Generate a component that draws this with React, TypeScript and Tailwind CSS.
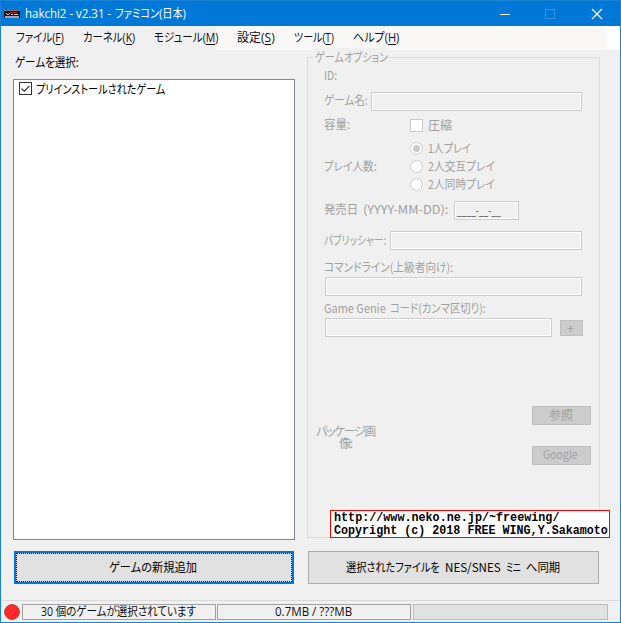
import React, { useLayoutEffect, useRef } from 'react';
import clsx from 'clsx';

type TextProps = {
  className?: string;
  children: React.ReactNode;
};

// Squeezes a single line of text horizontally so it fills the width of its box
const FitText: React.FC<TextProps> = ({ className, children }) => {
  const ref = useRef<HTMLSpanElement>(null);

  useLayoutEffect(() => {
    const fit = () => {
      const el = ref.current;
      if (!el || !el.parentElement) return;
      el.style.transform = `scaleX(${el.parentElement.clientWidth / el.offsetWidth})`;
    };
    fit();
    document.fonts.ready.then(fit);
  }, []);

  return (
    <span className={clsx('block shrink-0 whitespace-nowrap', className)}>
      <span ref={ref} className="inline-block origin-left">
        {children}
      </span>
    </span>
  );
};

const Field: React.FC<{ className: string; children?: React.ReactNode }> = ({ className, children }) => (
  <div className={clsx('h-[19px] shrink-0 border border-[#cccccc] bg-[#f0f0f0] shadow-[inset_0_0_0_1px_#fff]', className)}>
    {children}
  </div>
);

const Radio: React.FC<{ label: string; width: string; checked?: boolean }> = ({ label, width, checked }) => (
  <div className="flex h-[18px] items-center gap-[5px]">
    <span className="flex h-[13px] w-[13px] items-center justify-center rounded-full border border-[#cccccc] bg-white">
      {checked && <span className="h-[7px] w-[7px] rounded-full bg-[#cccccc]" />}
    </span>
    <FitText className={width}>{label}</FitText>
  </div>
);

const menus = [
  { label: 'ファイル', hotkey: 'F', width: 'w-[48px]' },
  { label: 'カーネル', hotkey: 'K', width: 'w-[52px]' },
  { label: 'モジュール', hotkey: 'M', width: 'w-[64px]' },
  { label: '設定', hotkey: 'S', width: 'w-[38px]' },
  { label: 'ツール', hotkey: 'T', width: 'w-[40px]' },
  { label: 'ヘルプ', hotkey: 'H', width: 'w-[46px]' },
];

const TitleBar = () => (
  <div className="flex h-[25px] shrink-0 items-center bg-[#0078d7] pl-[3px] font-['Open_Sans','Noto_Sans_CJK_JP',sans-serif] text-[12px] leading-[18px] text-white">
    <svg width="16" height="8" viewBox="0 0 16 8" shapeRendering="crispEdges">
      <rect width="16" height="8" fill="#15151c" />
      <rect width="16" height="1" fill="#77737c" />
      <rect x="1" y="6" width="14" height="2" fill="#a7a5a9" />
      <path d="M2 3.5h1M3 4.5h2M5 3.5h1M7 4.5h2M10 4.5h4" stroke="#ccc" />
      <path d="M6 2.5h7" stroke="#b32e3a" />
    </svg>
    <div className="ml-[5px] flex gap-[4px]">
      <FitText className="w-[86px]">hakchi2 - v2.31 -</FitText>
      <FitText className="w-[71px]">ファミコン(日本)</FitText>
    </div>
    <svg className="mr-[17px] ml-auto" width="103" height="12" viewBox="0 0 103 12" fill="none">
      <path d="M0 6.5h10" stroke="#fff" />
      <rect x="45.5" y="1.5" width="9" height="9" stroke="#3393df" />
      <path d="M92 1l10 10M102 1l-10 10" stroke="#fff" strokeWidth="1.2" />
    </svg>
  </div>
);

const MenuBar = () => (
  <div className="flex h-[24px] shrink-0 items-center gap-[19px] bg-linear-to-r from-[#f0f0f0] from-[215px] via-[#f9f8f7] via-[215px] to-[#f9f8f7] pl-[15px] font-['Open_Sans','Noto_Sans_CJK_JP',sans-serif] text-[12px] leading-[18px] text-[#111]">
    {menus.map(menu => (
      <FitText key={menu.hotkey} className={menu.width}>
        {menu.label}(<span className="underline underline-offset-2">{menu.hotkey}</span>)
      </FitText>
    ))}
    <div className="ml-auto h-full w-[13px] bg-[#fdfdfd]" />
  </div>
);

const GameList = () => (
  <div className="flex w-[282px] flex-col">
    <FitText className="mt-[3px] ml-[2px] w-[64px]">ゲームを選択:</FitText>
    <div className="mt-[8px] h-[461px] border border-[#828790] bg-white pl-[5px]">
      <div className="flex gap-[4px]">
        <svg className="mt-[2px]" width="13" height="13" viewBox="0 0 13 13" fill="none">
          <rect x="0.5" y="0.5" width="12" height="12" stroke="#333" />
          <path d="M2.5 6.5l2.7 2.7 5.3-5.4" stroke="#333" strokeWidth="1.2" />
        </svg>
        <FitText className="w-[129px]">プリインストールされたゲーム</FitText>
      </div>
    </div>
    <button className="mt-[11px] ml-[1px] flex h-[33px] w-[280px] items-center justify-center border-2 border-[#0078d7] bg-[#e1e1e1]">
      <span className="flex h-full w-full items-center justify-center border border-dotted border-black pr-[3px] pb-[2px]">
        <FitText className="w-[88px]">ゲームの新規追加</FitText>
      </span>
    </button>
  </div>
);

const GameOptions = () => (
  <div className="mt-[7px] h-[481px] w-[293px] border border-[#dcdcdc] text-[#a0a0a0]">
    <div className="-mt-[10px] mb-px ml-[5px] h-[18px] w-[76px] bg-[#f0f0f0] pl-[2px]">
      <FitText className="w-[73px]">ゲームオプション</FitText>
    </div>
    <div className="flex flex-col pl-[16px]">
      <FitText className="-mt-px w-[13px]">ID:</FitText>
      <div className="mt-[8px] flex h-[19px]">
        <FitText className="-mt-px w-[44px]">ゲーム名:</FitText>
        <Field className="ml-[3px] w-[211px]" />
      </div>
      <div className="mt-[7px] flex h-[14px] items-center">
        <FitText className="-mt-[2px] w-[26px]">容量:</FitText>
        <span className="ml-[60px] h-[13px] w-[13px] border border-[#cccccc] bg-white" />
        <FitText className="ml-[5px] w-[24px]">圧縮</FitText>
      </div>
      <div className="mt-[7px] flex items-center">
        <FitText className="w-[53px]">プレイ人数:</FitText>
        <div className="ml-[33px]">
          <Radio label="1人プレイ" width="w-[43px]" checked />
          <Radio label="2人交互プレイ" width="w-[67px]" />
          <Radio label="2人同時プレイ" width="w-[67px]" />
        </div>
      </div>
      <div className="mt-[8px] flex h-[19px]">
        <FitText className="-mt-px w-[34px]">発売日</FitText>
        <FitText className="-mt-px ml-[5px] w-[85px]">(YYYY-MM-DD):</FitText>
        <Field className="ml-[6px] w-[65px] pl-[2px] text-[#6d6d6d]">
          <FitText className="-mt-px w-[44px] font-medium">____-__-__</FitText>
        </Field>
      </div>
      <div className="mt-[11px] flex h-[19px]">
        <FitText className="w-[62px]">パブリッシャー:</FitText>
        <Field className="ml-[4px] w-[192px]" />
      </div>
      <FitText className="mt-[8px] w-[129px]">コマンドライン(上級者向け):</FitText>
      <Field className="mt-px ml-px w-[257px]" />
      <div className="mt-[3px] flex gap-[4px]">
        <FitText className="w-[62px]">Game Genie</FitText>
        <FitText className="w-[96px]">コード(カンマ区切り):</FitText>
      </div>
      <div className="mt-px ml-px flex items-center gap-[8px]">
        <Field className="w-[227px]" />
        <button className="flex h-[16px] w-[23px] items-center justify-center border border-[#bfbfbf] bg-[#cccccc] pr-[2px]">
          +
        </button>
      </div>
    </div>
    <div className="mt-[69px] flex justify-between pr-[8px] pl-[8px]">
      <p className="w-[59px] pt-[19px] text-center leading-[12px] tracking-[-1.4px] whitespace-nowrap">
        パッケージ画
        <br />
        像:
      </p>
      <div className="flex flex-col gap-[21px]">
        <button className="flex h-[19px] w-[59px] items-center justify-center border border-[#bfbfbf] bg-[#cccccc] pr-px pb-px">
          <FitText className="w-[24px]">参照</FitText>
        </button>
        <button className="flex h-[19px] w-[59px] items-center justify-center border border-[#bfbfbf] bg-[#cccccc] pr-[3px] pb-[3px]">
          <FitText className="w-[35px]">Google</FitText>
        </button>
      </div>
    </div>
  </div>
);

const StatusBar = () => (
  <div className="mt-[16px] flex h-[22px] shrink-0 items-center border-t border-[#d9d9d9] pl-[3px] font-['Open_Sans','Noto_Sans_CJK_JP',sans-serif] text-[12px] leading-[18px] text-[#111]">
    <svg width="16" height="16" viewBox="0 0 16 16">
      <circle cx="8" cy="8" r="7.5" fill="#fc2527" stroke="#b95050" />
      <path d="M3 9l6-6M5 12l7-7" stroke="#fd3133" strokeWidth="2" />
    </svg>
    <div className="ml-[2px] flex h-[16px] w-[194px] items-center justify-center border border-[#a0a0a0] pr-[2px]">
      <FitText className="w-[155px]">30 個のゲームが選択されています</FitText>
    </div>
    <div className="ml-px flex h-[16px] w-[194px] items-center justify-center border border-[#a0a0a0] pr-[2px]">
      <FitText className="w-[77px]">0.7MB / ???MB</FitText>
    </div>
    <div className="ml-[2px] h-[16px] w-[195px] border border-[#bcbcbc] bg-[#e1e1e1]" />
  </div>
);

export default function App() {
  return (
    <div className="relative flex h-[623px] w-[621px] flex-col overflow-hidden border border-[#1883d7] bg-[#f0f0f0] font-['Noto_Sans_CJK_JP',sans-serif] text-[12px] leading-[18px] text-black [font-feature-settings:'palt']">
      <TitleBar />
      <MenuBar />
      <div className="flex pl-[12px]">
        <GameList />
        <div className="ml-[12px]">
          <GameOptions />
          <button className="mt-[13px] ml-px flex h-[33px] w-[291px] items-center justify-center gap-[5px] border border-[#adadad] bg-[#e1e1e1] pr-[2px] pb-[2px]">
            <FitText className="w-[94px]">選択されたファイルを</FitText>
            <FitText className="w-[56px]">NES/SNES</FitText>
            <FitText className="w-[15px]">ミニ</FitText>
            <FitText className="w-[34px]">へ同期</FitText>
          </button>
        </div>
      </div>
      <StatusBar />

      {/* Credit badge on top of the options panel */}
      <div className="absolute top-[509px] left-[329px] h-[28px] w-[280px] border border-[#ff0000] bg-white pt-px pl-[3px] font-['Liberation_Mono',monospace] text-[12px] leading-[13px] font-bold">
        <FitText className="h-[13px] w-[225px]">http://www.neko.ne.jp/~freewing/</FitText>
        <FitText className="h-[13px] w-[274px]">Copyright (c) 2018 FREE WING,Y.Sakamoto</FitText>
      </div>
    </div>
  );
}
